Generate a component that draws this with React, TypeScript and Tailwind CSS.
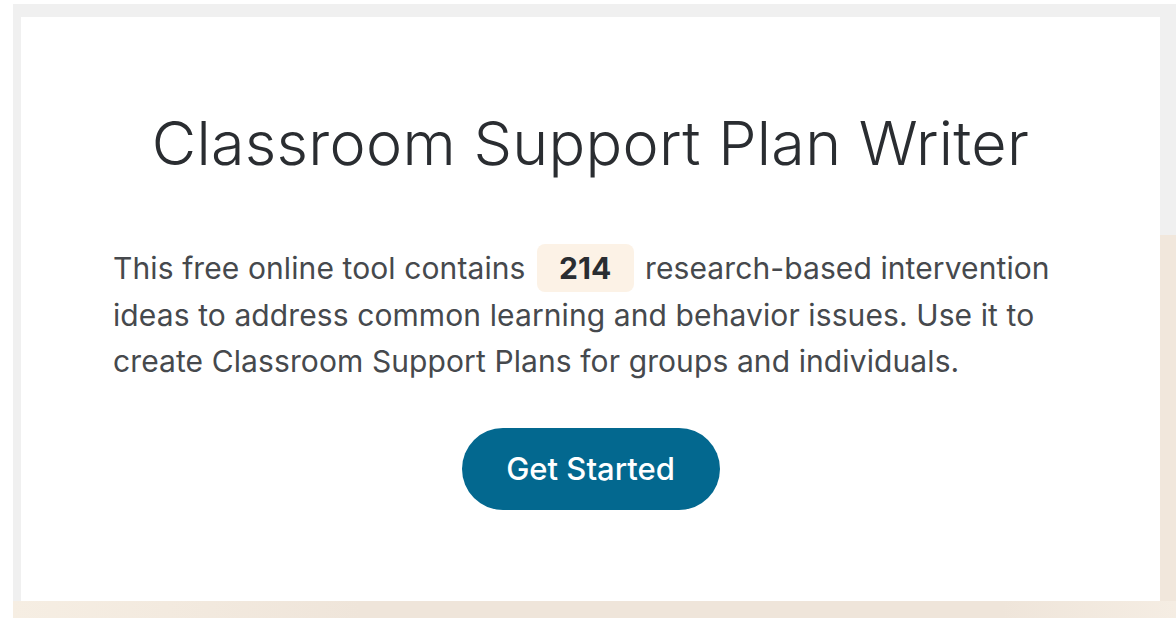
import React from 'react';

export default function App() {
  return (
    <div className="w-[1176px] h-[618px] bg-white pl-[13px] pt-[4px] font-['Inter',sans-serif]">
      <div className="h-full flex flex-col bg-[#f0f0f0]">
        <div className="h-[13px]" />
        <div className="flex flex-1">
          <div className="w-[8px]" />
          <section className="flex-1 bg-white flex flex-col items-center pt-[90px]">
            <h1 className="text-[61px] leading-[72px] font-light text-[#2a2d31] tracking-[0.3px]">
              Classroom Support Plan Writer
            </h1>
            <p className="mt-[65px] px-[92px] self-stretch text-[30px] leading-[46px] tracking-[0.1px] text-[#46494d]">
              This free online tool contains{' '}
              <span className="inline-block mx-[3px] px-[22px] rounded-[8px] bg-[#fcf2e6] font-bold text-[#2a2d31] leading-[48px]">
                214
              </span>{' '}
              research-based intervention ideas to address common learning and behavior issues. Use it to create Classroom
              Support Plans for groups and individuals.
            </p>
            <button className="mt-[44px] w-[258px] h-[82px] rounded-full bg-[#03688f] text-white text-[31px] font-medium">
              Get Started
            </button>
          </section>
          <div className="w-[16px] flex flex-col">
            <div className="h-[218px]" />
            <div className="flex-1 bg-[#f1e7dc]" />
          </div>
        </div>
        <div className="h-[17px] bg-[linear-gradient(to_right,#f6eee3,#efe5da_30%,#efe5da_85%,#f5ede3)]" />
      </div>
    </div>
  );
}
